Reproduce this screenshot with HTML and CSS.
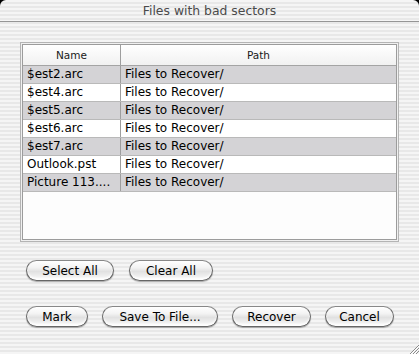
FILE: index.html
```html
<!DOCTYPE html>
<html lang="en">
<head>
    <meta charset="UTF-8">
    <title>Files with bad sectors</title>
    <link rel="stylesheet" href="styles.css">
</head>
<body>
    <!-- dialog window -->
    <div class="window">
        <div class="titlebar">Files with bad sectors</div>

        <div class="content">
            <!-- list of files -->
            <div class="frame">
                <div class="list">
                    <div class="row head">
                        <div class="cell name">Name</div>
                        <div class="cell path">Path</div>
                    </div>
                    <div class="row odd">
                        <div class="cell name">$est2.arc</div>
                        <div class="cell path">Files to Recover/</div>
                    </div>
                    <div class="row">
                        <div class="cell name">$est4.arc</div>
                        <div class="cell path">Files to Recover/</div>
                    </div>
                    <div class="row odd">
                        <div class="cell name">$est5.arc</div>
                        <div class="cell path">Files to Recover/</div>
                    </div>
                    <div class="row">
                        <div class="cell name">$est6.arc</div>
                        <div class="cell path">Files to Recover/</div>
                    </div>
                    <div class="row odd">
                        <div class="cell name">$est7.arc</div>
                        <div class="cell path">Files to Recover/</div>
                    </div>
                    <div class="row">
                        <div class="cell name">Outlook.pst</div>
                        <div class="cell path">Files to Recover/</div>
                    </div>
                    <div class="row odd">
                        <div class="cell name">Picture 113....</div>
                        <div class="cell path">Files to Recover/</div>
                    </div>
                </div>
            </div>

            <!-- selection buttons -->
            <div class="buttons select-row">
                <button class="btn btn-select">Select All</button>
                <button class="btn btn-clear">Clear All</button>
            </div>

            <!-- action buttons -->
            <div class="buttons action-row">
                <button class="btn btn-mark">Mark</button>
                <button class="btn btn-save">Save To File...</button>
                <button class="btn btn-recover">Recover</button>
                <button class="btn btn-cancel">Cancel</button>
            </div>
        </div>

        <!-- resize grip -->
        <svg class="grip" width="11" height="11" viewBox="0 0 11 11">
            <line x1="2" y1="11" x2="11" y2="2" stroke="#8a8a8a" stroke-width="1"/>
            <line x1="5" y1="11" x2="11" y2="5" stroke="#8a8a8a" stroke-width="1"/>
            <line x1="8" y1="11" x2="11" y2="8" stroke="#8a8a8a" stroke-width="1"/>
            <line x1="3" y1="11" x2="11" y2="3" stroke="#ffffff" stroke-width="1"/>
            <line x1="6" y1="11" x2="11" y2="6" stroke="#ffffff" stroke-width="1"/>
        </svg>
    </div>
</body>
</html>
```

FILE: styles.css
```css
/* page: black behind the rounded window corners */

html,
body {
    margin: 0;
    padding: 0;
    background: #000;
    font-family: "DejaVu Sans", sans-serif;
    color: #000;
}

.window {
    position: relative;
    width: 419px;
    height: 354px;
    border-radius: 6px 6px 0 0;
    background: repeating-linear-gradient(#f5f5f5 0 2px, #e8e8e8 2px 4px);
    overflow: hidden;
}

/* title bar */

.titlebar {
    height: 21px;
    line-height: 22px;
    text-align: center;
    font-size: 12.4px;
    color: #4a4a4a;
    border-bottom: 1px solid #959595;
}

.content {
    padding: 20px 0 0 20px;
}

/* list frame: outer light border, inner darker border */

.frame {
    width: 375px;
    height: 196px;
    border: 1px solid #b4b4b4;
    padding: 1px;
    background: #f0f0f0;
}

.list {
    height: 196px;
    box-sizing: border-box;
    border: 1px solid #9c9c9c;
    background: #fdfdfd;
}

.row {
    display: flex;
    height: 17px;
    border-bottom: 1px solid #b9b9b9;
    font-size: 12px;
    line-height: 17px;
    background: #fff;
}

.row.odd {
    background: #d4d3d6;
}

.row.head {
    height: 20px;
    line-height: 20px;
    font-size: 10.5px;
    background: linear-gradient(#ffffff, #f1f1f1);
    border-bottom: 1px solid #a4a4a4;
}

.cell {
    padding-left: 4px;
    white-space: nowrap;
    overflow: hidden;
}

.cell.name {
    flex: 0 0 98px;
    box-sizing: border-box;
    border-right: 1px solid #9e9e9e;
}

.cell.path {
    flex: 1;
}

.head .cell {
    padding-left: 0;
    text-align: center;
    color: #1a1a1a;
}

/* aqua style buttons */

.buttons {
    display: flex;
    gap: 14px;
    padding-left: 6px;
}

.select-row {
    gap: 15px;
    margin-top: 18px;
}

.action-row {
    margin-top: 25px;
}

.btn {
    height: 21px;
    padding: 0;
    border: 1px solid #666;
    border-top-color: #888;
    border-radius: 11px;
    font-family: "DejaVu Sans", sans-serif;
    font-size: 12px;
    line-height: 18px;
    color: #000;
    background: linear-gradient(#ffffff 0%, #f3f3f3 35%, #e1e1e1 55%, #efefef 80%, #fdfdfd 100%);
    box-shadow: 0 1px 1px rgba(0, 0, 0, 0.3), inset 0 -2px 2px rgba(255, 255, 255, 0.8);
}

.btn-select {
    width: 88px;
}

.btn-clear {
    width: 84px;
}

.btn-mark {
    width: 62px;
}

.btn-save {
    width: 116px;
}

.btn-recover {
    width: 79px;
}

.btn-cancel {
    width: 69px;
}

.grip {
    position: absolute;
    right: 0;
    bottom: 0;
}
```
